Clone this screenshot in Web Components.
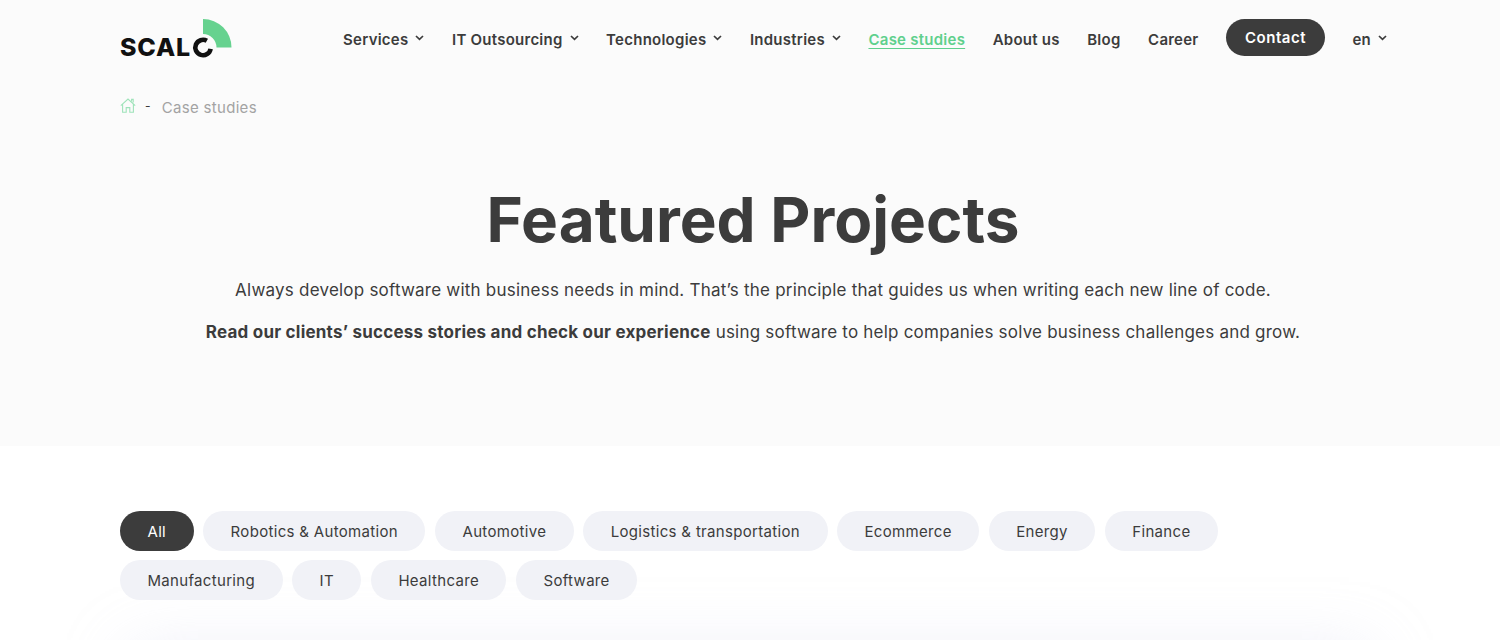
<!DOCTYPE html>
<html>
<head>
<meta charset="utf-8">
<title>Case studies</title>
<style>
    html, body { margin: 0; padding: 0; background: #fff; }
    body { height: 640px; overflow: hidden; font-family: Inter, "Liberation Sans", sans-serif; color: #3c3c3c; }
</style>
</head>
<body>
<site-hero>
    <site-header slot="header"></site-header>
    <bread-crumb slot="crumb" label="Case studies"></bread-crumb>
    <span slot="title">Featured Projects</span>
    <p slot="lead">Always develop software with business needs in mind. That’s the principle that guides us when writing each new line of code.</p>
    <p slot="lead"><b>Read our clients’ success stories and check our experience</b> using software to help companies solve business challenges and grow.</p>
</site-hero>
<filter-bar>
    <filter-pill active>All</filter-pill>
    <filter-pill>Robotics &amp; Automation</filter-pill>
    <filter-pill>Automotive</filter-pill>
    <filter-pill>Logistics &amp; transportation</filter-pill>
    <filter-pill>Ecommerce</filter-pill>
    <filter-pill>Energy</filter-pill>
    <filter-pill>Finance</filter-pill>
    <filter-pill>Manufacturing</filter-pill>
    <filter-pill>IT</filter-pill>
    <filter-pill>Healthcare</filter-pill>
    <filter-pill>Software</filter-pill>
</filter-bar>
<project-grid></project-grid>

<script>
const chevron = `<svg width="9" height="6" viewBox="0 0 9 6" fill="none" stroke="currentColor" stroke-width="1.7"><path d="M1 1 4.5 4.4 8 1"/></svg>`;

customElements.define('site-hero', class extends HTMLElement {
    constructor() {
        super();
        this.attachShadow({ mode: 'open' });
        this.shadowRoot.innerHTML = `<style>
            :host { display: block; height: 446px; background: #fbfbfb; box-sizing: border-box; }
            .crumb { padding: 14px 120px 0; height: 30px; }
            h1 { margin: 62px 0 0; text-align: center; font-size: 62px; line-height: 72px; font-weight: 700; color: #3c3c3c; padding-left: 6px; }
            .lead { margin-top: 21px; text-align: center; padding-left: 6px; font-size: 17px; line-height: 26px; letter-spacing: 0.22px; }
            ::slotted(p) { margin: 0 0 16px; }
        </style>
        <slot name="header"></slot>
        <div class="crumb"><slot name="crumb"></slot></div>
        <h1><slot name="title"></slot></h1>
        <div class="lead"><slot name="lead"></slot></div>`;
    }
});

customElements.define('site-header', class extends HTMLElement {
    constructor() {
        super();
        this.attachShadow({ mode: 'open' });
        this.shadowRoot.innerHTML = `<style>
            :host { display: flex; align-items: center; height: 78px; padding: 0 113px 0 120px; font-size: 15px; font-weight: 600; letter-spacing: 0.25px; color: #3c3c3c; }
            .logo { display: block; margin-right: auto; }
            nav { display: flex; align-items: center; gap: 27.5px; }
            a { color: inherit; text-decoration: none; display: flex; align-items: center; gap: 7px; white-space: nowrap; }
            a svg { margin-top: -3px; }
            a.on { color: #5fd08d; text-decoration: underline; text-underline-offset: 3px; }
            a.cta { background: #3c3c3c; color: #fff; border-radius: 19px; height: 37px; padding: 0 19px; margin-top: -3px; letter-spacing: 0.5px; }
        </style>
        <a class="logo" aria-label="Scalo"><site-logo></site-logo></a>
        <nav>
            <a>Services ${chevron}</a>
            <a>IT Outsourcing ${chevron}</a>
            <a>Technologies ${chevron}</a>
            <a>Industries ${chevron}</a>
            <a class="on">Case studies</a>
            <a>About us</a>
            <a>Blog</a>
            <a>Career</a>
            <a class="cta">Contact</a>
            <a>en ${chevron}</a>
        </nav>`;
    }
});

customElements.define('site-logo', class extends HTMLElement {
    constructor() {
        super();
        this.attachShadow({ mode: 'open' });
        this.shadowRoot.innerHTML = `<style>
            :host { display: block; position: relative; width: 112px; height: 40px; }
            .word { position: absolute; left: 0; top: 15px; font: 800 25px/26px Inter, sans-serif; color: #111; letter-spacing: 0.8px; }
            svg { position: absolute; left: 0; top: 0; }
        </style>
        <span class="word">SCAL</span>
        <svg width="112" height="40" viewBox="0 0 112 40" fill="none">
            <path d="M86.85 21.83A7.7 7.7 0 1 0 90.6 29.8" stroke="#111" stroke-width="4.6"/>
            <path d="M83 0A28.5 28.5 0 0 1 111.5 28.5H96.5A13.5 13.5 0 0 0 83 15Z" fill="#66d28f"/>
        </svg>`;
    }
});

customElements.define('bread-crumb', class extends HTMLElement {
    constructor() {
        super();
        this.attachShadow({ mode: 'open' });
        const label = this.getAttribute('label');
        this.shadowRoot.innerHTML = `<style>
            :host { display: flex; align-items: center; height: 30px; font-size: 15px; letter-spacing: 0.3px; color: #a3a3a3; }
            svg { display: block; margin-top: -4px; }
            .dash { margin: -4px 11px 0 9px; color: #3c3c3c; font-size: 12px; }
        </style>
        <svg width="16" height="15" viewBox="0 0 16 15" fill="none" stroke="#9fe3ba" stroke-width="1.1">
            <path d="M.8 7.6 8 1l7.2 6.6M2.6 6.2v8h3.6V9.6h3.6v4.6h3.6v-8M11.6 3.2V1.4h1.6v3.2"/>
        </svg>
        <span class="dash">-</span>
        <span>${label}</span>`;
    }
});

customElements.define('filter-bar', class extends HTMLElement {
    constructor() {
        super();
        this.attachShadow({ mode: 'open' });
        this.shadowRoot.innerHTML = `<style>
            :host { display: flex; flex-wrap: wrap; align-content: flex-start; gap: 9px 9.5px; box-sizing: border-box; padding: 65px 120px 0; height: 204px; }
        </style><slot></slot>`;
    }
});

customElements.define('filter-pill', class extends HTMLElement {
    constructor() {
        super();
        this.attachShadow({ mode: 'open' });
        this.shadowRoot.innerHTML = `<style>
            :host { display: flex; align-items: center; height: 40px; padding: 0 27.5px; border-radius: 20px; background: #f1f2f7; font-size: 15px; letter-spacing: 0.32px; color: #3c3c3c; white-space: nowrap; }
            :host([active]) { background: #3c3c3c; color: #fff; }
        </style><slot></slot>`;
    }
});

// cards start below the fold, only their shadow shows
customElements.define('project-grid', class extends HTMLElement {
    constructor() {
        super();
        this.attachShadow({ mode: 'open' });
        this.shadowRoot.innerHTML = `<style>
            :host { display: block; height: 300px; margin: 0 130px; background: #f8f8fc; box-shadow: 0 0 60px rgba(205, 210, 235, 0.35); }
        </style>`;
    }
});
</script>
</body>
</html>
